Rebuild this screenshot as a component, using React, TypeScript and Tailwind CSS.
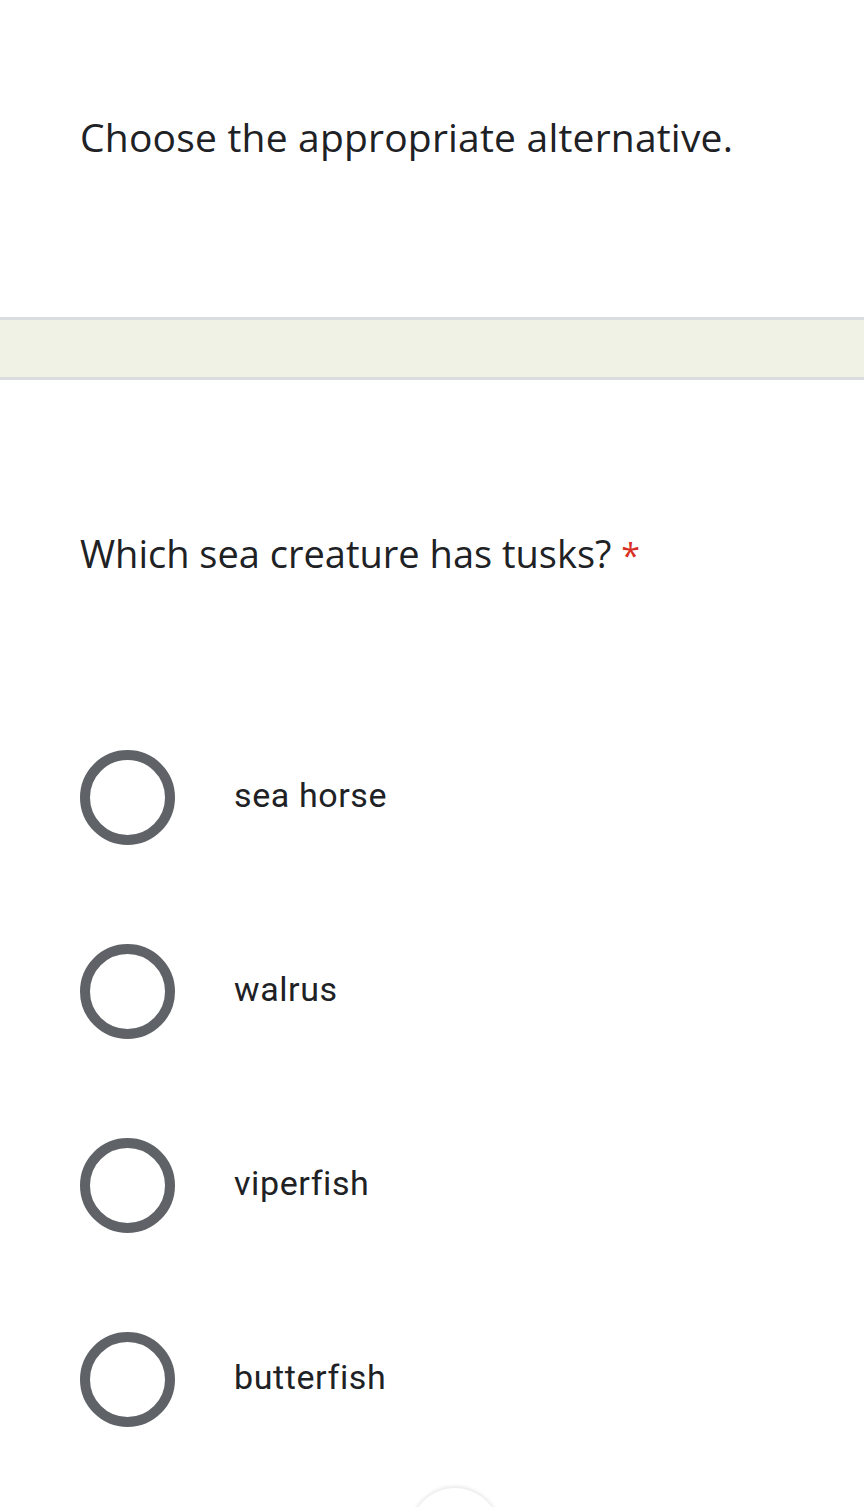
import React from "react";

const options = ["sea horse", "walrus", "viperfish", "butterfish"];

function Radio() {
  return (
    <div className="w-[95px] h-[95px] rounded-full border-[10px] border-[#5f6368] shrink-0" />
  );
}

export default function App() {
  return (
    <div className="w-[864px] h-[1507px] bg-white overflow-hidden relative" style={{ fontFamily: "Roboto, 'Liberation Sans', sans-serif" }}>
      <div className="h-[317px] px-[80px] pt-[111px]">
        <h1 className="text-[39px] leading-[52px] text-[#202124] tracking-[0.2px] whitespace-nowrap" style={{ fontFamily: "'Open Sans', Roboto, sans-serif" }}>
          Choose the appropriate alternative.
        </h1>
      </div>
      <div className="h-[63px] bg-[#f1f2e6] border-y-[3px] border-[#dadce0]" />
      <div className="px-[80px] pt-[149px]">
        <div className="text-[38px] leading-[48px] text-[#202124] whitespace-nowrap" style={{ fontFamily: "'Open Sans', Roboto, sans-serif" }}>
          Which sea creature has tusks? <span className="text-[#d93025] text-[34px]">*</span>
        </div>
      </div>
      <div className="px-[80px] pt-[171px] flex flex-col gap-[99px]">
        {options.map((o) => (
          <div key={o} className="flex items-center h-[95px]">
            <Radio />
            <span className="ml-[59px] pb-[4px] text-[34px] text-[#202124] tracking-[0.6px]">{o}</span>
          </div>
        ))}
      </div>
      <div className="absolute left-[410px] top-[1488px] w-[90px] h-[90px] rounded-full bg-white shadow-[0_-1px_4px_rgba(0,0,0,0.12)]" />
    </div>
  );
}
